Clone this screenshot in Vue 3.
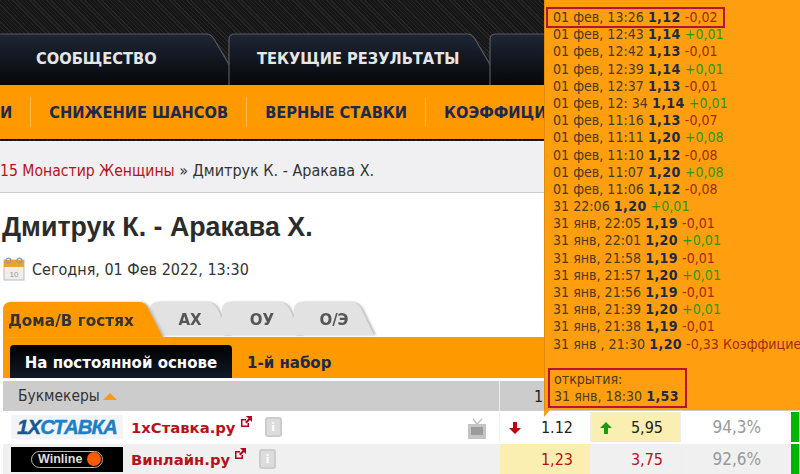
<template>
  <div class="page">
    <header class="head">
      <nav class="main-tabs">
        <a v-for="t in mainTabs" :key="t.width" class="main-tab" :style="{ width: t.width + 'px' }">
          <svg class="tab-bg" :viewBox="`0 0 ${t.width} 52`" preserveAspectRatio="none">
            <defs>
              <linearGradient :id="'g' + t.width" x1="0" y1="0" x2="0" y2="1">
                <stop offset="0" stop-color="#1e2635" />
                <stop offset="1" stop-color="#05070b" />
              </linearGradient>
            </defs>
            <path
              :d="`M1 52V6Q1 1 7 1H${t.width - 35}Q${t.width - 30} 1 ${t.width - 27} 6L${t.width} 52`"
              :fill="`url(#g${t.width})`"
              stroke="#555a60"
              stroke-width="1.2"
            />
          </svg>
          <span class="tab-label">{{ t.label }}</span>
        </a>
      </nav>
      <div class="sub-nav">
        <span v-for="s in subNav" :key="s" class="sub-item">{{ s }}</span>
      </div>
    </header>

    <div class="crumbs">
      <span class="crumb-link">15 Монастир Женщины</span> » Дмитрук К. - Аракава Х.
    </div>

    <main class="content">
      <h1>Дмитрук К. - Аракава Х.</h1>
      <div class="date">
        <svg width="22" height="24" viewBox="0 0 22 24">
          <rect x="1" y="3" width="20" height="20" fill="#eeeeee" stroke="#bbbbbb" />
          <rect x="1" y="3" width="20" height="7" fill="#f0a030" />
          <circle cx="5.500" cy="3.500" r="2.400" fill="none" stroke="#999999" stroke-width="1.200" />
          <circle cx="16.500" cy="3.500" r="2.400" fill="none" stroke="#999999" stroke-width="1.200" />
          <text x="11" y="20" font-size="8" text-anchor="middle" fill="#999999" font-family="Liberation Sans, sans-serif">10</text>
        </svg>
        <span>Сегодня, 01 Фев 2022, 13:30</span>
      </div>

      <div class="market-tabs">
        <span class="market active"><span>Дома/В гостях</span></span>
        <span v-for="m in markets" :key="m" class="market"><span>{{ m }}</span></span>
      </div>
      <div class="period-bar">
        <span class="period active">На постоянной основе</span>
        <span class="period">1-й набор</span>
      </div>

      <div class="odds-table">
        <div class="row header">
          <div class="cell book">Букмекеры<i class="sort"></i></div>
          <div class="cell num head-num">1</div>
          <div class="cell num"></div>
          <div class="cell num"></div>
          <div class="cell flag"></div>
        </div>
        <div class="row">
          <div class="cell book">
            <span class="logo logo-x"><em>1X</em>СТАВКА</span>
            <a class="book-name">1хСтавка.ру</a>
            <svg class="ext" width="12" height="12" viewBox="0 0 12 12">
              <path d="M1 3h5v1.500H2.500v5h5V7H9v4H1z" fill="#b00020" />
              <path d="M6 0h6v6l-2-2-3.500 3.500-1.500-1.500L8.500 2.500z" fill="#b00020" />
            </svg>
            <span class="info">i</span>
            <svg class="tv" width="20" height="22" viewBox="0 0 20 22">
              <path d="M6 1l4 5 5-5" fill="none" stroke="#bbbbbb" stroke-width="1.300" />
              <rect x="1" y="6" width="18" height="15" fill="#c4c4c4" />
              <rect x="4" y="9" width="12" height="8" fill="#9c9c9c" />
            </svg>
          </div>
          <div class="cell num">
            <svg class="arrow" width="12" height="12" viewBox="0 0 12 12"><path d="M4 0h4v6h4l-6 6-6-6h4z" fill="#c00010" /></svg>
            1.12
          </div>
          <div class="cell num yellow">
            <svg class="arrow" width="12" height="12" viewBox="0 0 12 12"><path d="M4 12h4V6h4L6 0 0 6h4z" fill="#1a9a10" /></svg>
            5,95
          </div>
          <div class="cell num pct">94,3%</div>
          <div class="cell flag"><i></i></div>
        </div>
        <div class="row alt">
          <div class="cell book">
            <span class="logo logo-w"><span class="pill">Winline<i></i></span></span>
            <a class="book-name">Винлайн.ру</a>
            <svg class="ext" width="12" height="12" viewBox="0 0 12 12">
              <path d="M1 3h5v1.500H2.500v5h5V7H9v4H1z" fill="#b00020" />
              <path d="M6 0h6v6l-2-2-3.500 3.500-1.500-1.500L8.500 2.500z" fill="#b00020" />
            </svg>
            <span class="info">i</span>
          </div>
          <div class="cell num yellow red">1,23</div>
          <div class="cell num red">3,75</div>
          <div class="cell num pct">92,6%</div>
          <div class="cell flag"><i></i></div>
        </div>
      </div>
    </main>

    <aside class="history">
      <div v-for="(h, i) in history" :key="i" class="line" :class="{ boxed: i === 0 }">
        {{ h.time }} <b>{{ h.odd }}</b> <span :class="h.diff[0] === '+' ? 'up' : 'down'">{{ h.diff }}{{ h.note }}</span>
      </div>
      <div class="opening">
        открытия:<br />
        31 янв, 18:30 <b>1,53</b>
      </div>
    </aside>
  </div>
</template>

<script setup>
const mainTabs = [
  { label: "СООБЩЕСТВО", width: 266 },
  { label: "ТЕКУЩИЕ РЕЗУЛЬТАТЫ", width: 274 },
  { label: "", width: 120 },
];
const subNav = ["И", "СНИЖЕНИЕ ШАНСОВ", "ВЕРНЫЕ СТАВКИ", "КОЭФФИЦИЕНТЫ"];
const markets = ["АХ", "ОУ", "О/Э"];

const history = [
  { time: "01 фев, 13:26", odd: "1,12", diff: "-0,02" },
  { time: "01 фев, 12:43", odd: "1,14", diff: "+0,01" },
  { time: "01 фев, 12:42", odd: "1,13", diff: "-0,01" },
  { time: "01 фев, 12:39", odd: "1,14", diff: "+0,01" },
  { time: "01 фев, 12:37", odd: "1,13", diff: "-0,01" },
  { time: "01 фев, 12: 34", odd: "1,14", diff: "+0,01" },
  { time: "01 фев, 11:16", odd: "1,13", diff: "-0,07" },
  { time: "01 фев, 11:11", odd: "1,20", diff: "+0,08" },
  { time: "01 фев, 11:10", odd: "1,12", diff: "-0,08" },
  { time: "01 фев, 11:07", odd: "1,20", diff: "+0,08" },
  { time: "01 фев, 11:06", odd: "1,12", diff: "-0,08" },
  { time: "31 22:06", odd: "1,20", diff: "+0,01" },
  { time: "31 янв, 22:05", odd: "1,19", diff: "-0,01" },
  { time: "31 янв, 22:01", odd: "1,20", diff: "+0,01" },
  { time: "31 янв, 21:58", odd: "1,19", diff: "-0,01" },
  { time: "31 янв, 21:57", odd: "1,20", diff: "+0,01" },
  { time: "31 янв, 21:56", odd: "1,19", diff: "-0,01" },
  { time: "31 янв, 21:39", odd: "1,20", diff: "+0,01" },
  { time: "31 янв, 21:38", odd: "1,19", diff: "-0,01" },
  { time: "31 янв , 21:30", odd: "1,20", diff: "-0,33", note: " Коэффициент" },
];
</script>

<style>
html,
body {
  margin: 0;
  overflow: hidden;
}
</style>

<style scoped>
.page {
  position: relative;
  width: 800px;
  height: 474px;
  overflow: hidden;
  background: #fff;
  font-family: "DejaVu Sans Condensed", "DejaVu Sans", sans-serif;
  color: #222;
}

.head {
  height: 141px;
  padding-top: 33px;
  box-sizing: border-box;
  background-color: #1c1c1c;
  background-image: repeating-linear-gradient(45deg, #262626 0 1px, #161616 1px 3px);
}
.main-tabs {
  display: flex;
  height: 52px;
  margin-left: -25px;
}
.main-tab {
  position: relative;
  display: flex;
  align-items: center;
  flex: none;
  margin-right: -13px;
}
.tab-bg {
  position: absolute;
  inset: 0;
  width: 100%;
  height: 100%;
}
.tab-label {
  position: relative;
  padding: 0 0 1px 29px;
  font: bold 16.3px "DejaVu Sans Condensed", sans-serif;
  color: #e6e6e6;
  white-space: nowrap;
}
.main-tab:first-child .tab-label {
  padding-left: 61px;
}

.sub-nav {
  display: flex;
  align-items: center;
  height: 55px;
  background: #ff9900;
  border-bottom: 1px solid #0c0c0c;
  box-sizing: border-box;
  white-space: nowrap;
}
.sub-item {
  display: flex;
  align-items: center;
  height: 30px;
  padding: 0 18px;
  border-left: 1px solid #ffb84d;
  font: bold 16.3px "DejaVu Sans Condensed", sans-serif;
  color: #1b2a4d;
}
.sub-item:first-child {
  border-left: 0;
  padding: 0 18px 0 0;
}

.crumbs {
  height: 52px;
  box-sizing: border-box;
  background: #f0f0f2;
  border-bottom: 1px solid #ccc;
  font: 16px/59px "DejaVu Sans Condensed", sans-serif;
  color: #333;
  white-space: nowrap;
}
.crumb-link {
  font-size: 15.6px;
  color: #b5121b;
}

.content {
  padding: 0 0 0 3px;
}
h1 {
  margin: 0 0 0 -1px;
  padding-top: 17px;
  font: bold 26.8px/34px "Liberation Sans", sans-serif;
  color: #2b2b2b;
  white-space: nowrap;
}
.date {
  display: flex;
  align-items: center;
  gap: 7px;
  margin-top: 11px;
  height: 28px;
  font: 16px "DejaVu Sans Condensed", sans-serif;
  color: #333;
}

.market-tabs {
  display: flex;
  height: 35px;
  margin-top: 19px;
}
.market {
  position: relative;
  display: flex;
  align-items: center;
  justify-content: center;
  flex: none;
  width: 80px;
  height: 33px;
  margin-left: -8px;
  padding-top: 2px;
  box-sizing: border-box;
  font: bold 15px "DejaVu Sans", sans-serif;
  color: #555;
  filter: drop-shadow(2px 0 1px #bbbbbb);
}
.market::before {
  content: "";
  position: absolute;
  inset: 0;
  background: #e2e2e2;
  clip-path: path("M0 33V8Q0 0 8 0H56Q64 0 68 8L80 33Z");
}
.market span {
  position: relative;
}
.market.active {
  z-index: 1;
  width: 160px;
  height: 35px;
  margin: 0 -5px 0 0;
  padding-right: 24px;
  color: #333;
  font-size: 15.3px;
}
.market.active::before {
  background: #ff9900;
  clip-path: path("M0 35V8Q0 0 8 0H136Q143 0 146 8L160 35Z");
}

.period-bar {
  display: flex;
  align-items: flex-end;
  gap: 15px;
  height: 41px;
  padding-left: 7px;
  box-sizing: border-box;
  background: #ff9900;
}
.period {
  display: flex;
  align-items: center;
  height: 33px;
  padding-top: 3px;
  box-sizing: border-box;
  font: bold 15px "DejaVu Sans", sans-serif;
  color: #1b2a4d;
}
.period.active {
  width: 222px;
  justify-content: center;
  border-radius: 4px 4px 0 0;
  background: linear-gradient(#000, #111a28);
  color: #fff;
}

.odds-table {
  margin-top: 3px;
}
.row {
  display: grid;
  grid-template-columns: 496px 91px 90px 111px 1fr;
  height: 30px;
  margin-top: 2px;
  background: #fff;
}
.row.header {
  margin-top: 0;
  margin-bottom: -1px;
  background: #cccccc;
}
.row.alt {
  background: #f0f0f0;
}
.cell {
  position: relative;
  display: flex;
  align-items: center;
  border-left: 1px solid #eee;
  box-sizing: border-box;
  font: 16px "DejaVu Sans Condensed", sans-serif;
}
.book {
  border-left: 0;
  padding-left: 8px;
  color: #333;
}
.row.header .book {
  padding-left: 15px;
  font-size: 15.4px;
}
.sort {
  width: 0;
  height: 0;
  margin-left: 3px;
  border: 7px solid transparent;
  border-top: 0;
  border-bottom-color: #f59a1a;
}
.num {
  justify-content: flex-end;
  padding-right: 17px;
  color: #222;
}
.head-num {
  justify-content: flex-start;
  padding-left: 34px;
}
.arrow {
  position: absolute;
  left: 9px;
  top: 10px;
}
.yellow {
  background: #faeeb0;
}
.red {
  color: #b5121b;
}
.pct {
  padding-right: 30px;
  font-size: 17px;
  color: #999;
}
.flag {
  align-items: stretch;
  border: 0;
}
.flag i {
  width: 8px;
  background: #00b400;
}

.logo {
  display: flex;
  align-items: center;
  justify-content: center;
  flex: none;
  width: 112px;
  height: 24px;
  box-sizing: border-box;
}
.logo-x {
  background: #f2f4f7;
  font: italic bold 20.5px "Liberation Sans", sans-serif;
  letter-spacing: -1px;
  color: #1e80c4;
  -webkit-text-stroke: 0.4px currentColor;
}
.logo-x em {
  color: #14598f;
}
.logo-w {
  height: 25px;
  background: #000;
}
.pill {
  display: flex;
  align-items: center;
  justify-content: space-between;
  width: 72px;
  height: 17px;
  padding: 0 1px 0 6px;
  box-sizing: border-box;
  border: 1.500px solid #bbb;
  border-radius: 9px;
  font: bold 12.500px "Liberation Sans", sans-serif;
  color: #ddd;
}
.pill i {
  width: 14px;
  height: 14px;
  border-radius: 50%;
  background: #ff5a00;
}
.book-name {
  margin-left: 8px;
  font: bold 14.8px "DejaVu Sans", sans-serif;
  color: #b5121b;
}
.ext {
  margin: -11px 0 0 4px;
}
.info {
  display: flex;
  align-items: center;
  justify-content: center;
  width: 17px;
  height: 20px;
  margin-left: 13px;
  box-sizing: border-box;
  border: 2px solid #cccccc;
  border-radius: 3px;
  background: #dcdcdc;
  font: bold 13px "Liberation Serif", serif;
  color: #fff;
}
.tv {
  position: absolute;
  right: 12px;
  top: 6px;
}

.history {
  position: absolute;
  top: 0;
  left: 544px;
  width: 256px;
  height: 410px;
  padding: 9px 0 0 3px;
  box-sizing: border-box;
  background: #ff9f0f;
  font: 14.1px/17.200px "DejaVu Sans Condensed", sans-serif;
  color: #4a3a1e;
  white-space: nowrap;
  border-left: 1px solid #e08a00;
}
.history::after {
  content: "";
  position: absolute;
  left: -1px;
  bottom: -7px;
  border-top: 7px solid #ff9f0f;
  border-right: 6px solid transparent;
}
.line {
  padding-left: 5px;
  height: 17.2px;
}
.line.boxed {
  width: 170px;
  outline: 2px solid #b5123c;
  outline-offset: 0;
}
.history b {
  letter-spacing: 0.4px;
  color: #1f2a44;
}
.up {
  color: #1f9a10;
}
.down {
  color: #a32a10;
}
.opening {
  display: inline-block;
  margin-top: 15px;
  padding: 1px 6px 1px 4px;
  border: 2px solid #b5123c;
}
</style>
